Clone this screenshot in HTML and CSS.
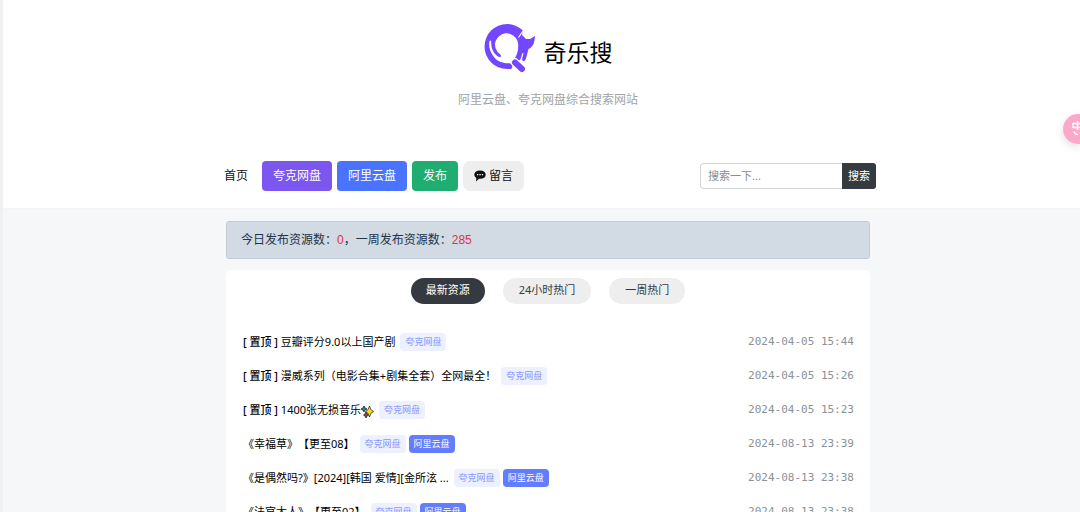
FILE: index.html
```html
<!DOCTYPE html>
<html lang="zh-CN">
<head>
<meta charset="utf-8">
<meta name="viewport" content="width=device-width, initial-scale=1">
<title>奇乐搜</title>
<link rel="stylesheet" href="styles.css">
</head>
<body>
<header class="site-header">
  <div class="brand">
    <svg class="brand-logo" viewBox="0 0 52 50" aria-hidden="true">
      <path d="M39 7.500C34 3 28 1 23 1A22.500 22.500 0 0 0 23 46h2.500a2.800 2.800 0 0 0 0-5.700C18 40.300 13 38 10 34 6.500 29.500 4.500 25 5.300 18.500q1-2 2 0C6.800 25 9 30 14.500 33.700c1.500 1 3.500 0 2-2A11.600 11.600 0 1 1 34.200 23c0 5-1 8-3 11.500-1 2 .5 3.500 2.500 3.500 1.500 0 2.500-1 3-2.500l1.800-5.500h1l-1.200 5c-.5 2 .2 3 1.300 3 1.200 0 2-1 2.400-2.500l2.500-9.500c4.500-2 6-6 6.500-13l-5 3h-4l-4-4z" fill="#7347ff"/>
      <path d="M40 6.500 34.500 14.500" fill="none" stroke="#fff" stroke-width="1.200"/>
      <path d="M30.500 39l7.500 7" stroke="#fff" stroke-width="8.500" stroke-linecap="round"/>
      <path d="M31 39.500l7 6.500" stroke="#7347ff" stroke-width="6" stroke-linecap="round"/>
    </svg>
    <h1 class="brand-name">奇乐搜</h1>
  </div>
  <p class="tagline">阿里云盘、夸克网盘综合搜索网站</p>
  <div class="toolbar">
    <nav class="nav">
      <a class="nav-home" href="#">首页</a>
      <a class="nav-button quark" href="#">夸克网盘</a>
      <a class="nav-button ali" href="#">阿里云盘</a>
      <a class="nav-button publish" href="#">发布</a>
      <a class="nav-button message" href="#">
        <svg class="bubble" viewBox="0 0 12 12" aria-hidden="true"><path d="M6 .5C2.300.5.300 2.200.3 4.700c0 1.400.8 2.500 2 3.200L2 11.500l3-2.700h1c3.700 0 5.700-1.600 5.700-4.100S9.700.5 6 .5z" fill="#111"/><path d="M3 4h1.300v1.200H3zM5.400 4h1.300v1.200H5.400zM7.800 4h1.300v1.200H7.800z" fill="#fff"/></svg>留言</a>
    </nav>
    <form class="search">
      <input class="search-input" type="text" placeholder="搜索一下..." aria-label="搜索">
      <button class="search-button" type="button">搜索</button>
    </form>
  </div>
</header>
<main class="content">
  <p class="notice">今日发布资源数：<span class="count">0</span>，一周发布资源数：<span class="count">285</span></p>
  <section class="card">
    <div class="tabs">
      <button class="tab active" type="button">最新资源</button>
      <button class="tab" type="button">24小时热门</button>
      <button class="tab" type="button">一周热门</button>
    </div>
    <ul class="list">
      <li class="row"><a class="title" href="#"><b class="pin">[ 置顶 ]</b> 豆瓣评分9.0以上国产剧</a><span class="badge">夸克网盘</span><time class="date">2024-04-05 15:44</time></li>
      <li class="row"><a class="title" href="#"><b class="pin">[ 置顶 ]</b> 漫威系列（电影合集+剧集全套）全网最全！</a><span class="badge">夸克网盘</span><time class="date">2024-04-05 15:26</time></li>
      <li class="row"><a class="title" href="#"><b class="pin">[ 置顶 ]</b> 1400张无损音乐<svg class="sparkle" viewBox="0 0 13 13" aria-hidden="true"><path d="M3 1l1 2 2 1-2 1-1 2-1-2-2-1 2-1z" fill="#188a91" stroke="#111" stroke-width=".7"/><path d="M5 7l1 2 1.500 1L6 11l-1 2-1-2-1.500-1L4 9z" fill="#a83b4b" stroke="#111" stroke-width=".7"/><path d="M8.500 1Q9 5.500 12.700 6.500 9 7.500 8.500 12 7.500 7.500 4.500 6.500 7.500 5.500 8.500 1z" fill="#ffe000" stroke="#111" stroke-width=".7"/></svg></a><span class="badge">夸克网盘</span><time class="date">2024-04-05 15:23</time></li>
      <li class="row"><a class="title" href="#">《幸福草》【更至08】</a><span class="badge">夸克网盘</span><span class="badge solid">阿里云盘</span><time class="date">2024-08-13 23:39</time></li>
      <li class="row"><a class="title" href="#">《是偶然吗?》[2024][韩国 爱情][金所泫 ...</a><span class="badge">夸克网盘</span><span class="badge solid">阿里云盘</span><time class="date">2024-08-13 23:38</time></li>
      <li class="row"><a class="title" href="#">《法官大人》【更至02】</a><span class="badge">夸克网盘</span><span class="badge solid">阿里云盘</span><time class="date">2024-08-13 23:38</time></li>
    </ul>
  </section>
</main>
<button class="translate" type="button" aria-label="翻译">
  <svg class="translate-icon" viewBox="0 0 18 18" aria-hidden="true"><path d="M2 3.500h9v4H2zM6.500 1v9M3 11.500q.5 3 4 3M12 15l2.500-7 2.500 7" fill="none" stroke="#fff" stroke-width="1.500"/></svg>
</button>
</body>
</html>
```
FILE: styles.css
```css
* {
  box-sizing: border-box;
}

body {
  margin: 0;
  border-left: 3px solid #f0f1f2;
  background: #f6f7f9;
  color: #111;
  font: 12px/18px "Noto Sans", "Noto Sans CJK SC", sans-serif;
  text-spacing-trim: space-all;
  overflow-x: hidden;
}

a {
  color: inherit;
  text-decoration: none;
}

button,
input {
  margin: 0;
  font: inherit;
}

.site-header {
  padding: 23px 0 17px 13px;
  background: #fff;
  border-bottom: 1px solid #f4f4f5;
}

.brand {
  display: flex;
  justify-content: center;
  align-items: center;
  gap: 8px;
  height: 50px;
}

.brand-logo {
  width: 52px;
  height: 50px;
}

.brand-name {
  margin: 8px 0 0;
  font-size: 23px;
  line-height: 32px;
  font-weight: 400;
  color: #000;
}

.tagline {
  margin: 18px 0 52px;
  text-align: center;
  color: #a0a4a8;
}

.toolbar {
  display: flex;
  justify-content: space-between;
  align-items: center;
  max-width: 656px;
  margin: 0 auto;
  padding-left: 4px;
}

.nav {
  display: flex;
  align-items: center;
  gap: 5px;
}

.nav-home {
  margin-right: 9px;
}

.nav-button {
  display: flex;
  align-items: center;
  gap: 3px;
  height: 30px;
  padding: 0 11px;
  border-radius: 4px;
  color: #fff;
}

.quark {
  background: #7b57ef;
}

.ali {
  background: #4a73ff;
}

.publish {
  background: #20ad71;
}

.message {
  border-radius: 7px;
  background: #eee;
  color: #111;
}

.bubble {
  width: 12px;
  height: 12px;
}

.search {
  display: flex;
  height: 26px;
  font-size: 11px;
}

.search-input {
  width: 142px;
  padding: 0 7px;
  border: 1px solid #ced4da;
  border-right: 0;
  border-radius: 4px 0 0 4px;
  background: #fff;
}

.search-input::placeholder {
  color: #868e96;
}

.search-button {
  width: 34px;
  padding: 0;
  border: 0;
  border-radius: 0 3px 3px 0;
  background: #343a40;
  color: #fff;
}

.content {
  max-width: 657px;
  margin: 0 auto;
  padding: 12px 0 0 13px;
}

.notice {
  margin: 0 0 11px;
  padding: 9px 14px;
  border: 1px solid #c2ccd8;
  border-radius: 3px;
  background: #d2dae3;
  color: #243447;
}

.count {
  color: #dc3545;
  font-family: "Liberation Sans", sans-serif;
}

.card {
  padding: 8px 16px 16px;
  border-radius: 6px;
  background: #fff;
}

.tabs {
  display: flex;
  justify-content: center;
  gap: 18px;
  margin-bottom: 21px;
}

.tab {
  height: 26px;
  padding: 0 16px 2px;
  border: 0;
  border-radius: 13px;
  background: #eee;
  color: #343a40;
  font-size: 11px;
}

.active {
  padding: 0 15px 2px;
  background: #343a40;
  color: #fff;
}

.list {
  margin: 0;
  padding: 0;
  list-style: none;
}

.row {
  display: flex;
  align-items: center;
  gap: 3px;
  height: 34px;
  font-size: 11px;
}

.title {
  margin-right: 2px;
  padding-left: 1px;
  color: #000;
}

.pin {
  font-weight: 500;
}

.sparkle {
  width: 13px;
  height: 13px;
  vertical-align: middle;
}

.badge {
  padding: 0 5px;
  border-radius: 4px;
  background: #edf1ff;
  color: #8797ff;
  font-size: 9px;
  line-height: 18px;
}

.solid {
  background: #627dff;
  color: #fff;
}

.date {
  margin-left: auto;
  color: #8a9199;
  font-family: "DejaVu Sans Mono", monospace;
}

.translate {
  position: absolute;
  top: 114px;
  right: 0;
  width: 17px;
  height: 30px;
  padding: 0 0 0 8px;
  overflow: hidden;
  border: 0;
  border-radius: 15px 0 0 15px;
  background: #fba9cb;
  box-shadow: 0 3px 8px #0002;
}

.translate-icon {
  display: block;
  width: 18px;
  height: 18px;
}
```
